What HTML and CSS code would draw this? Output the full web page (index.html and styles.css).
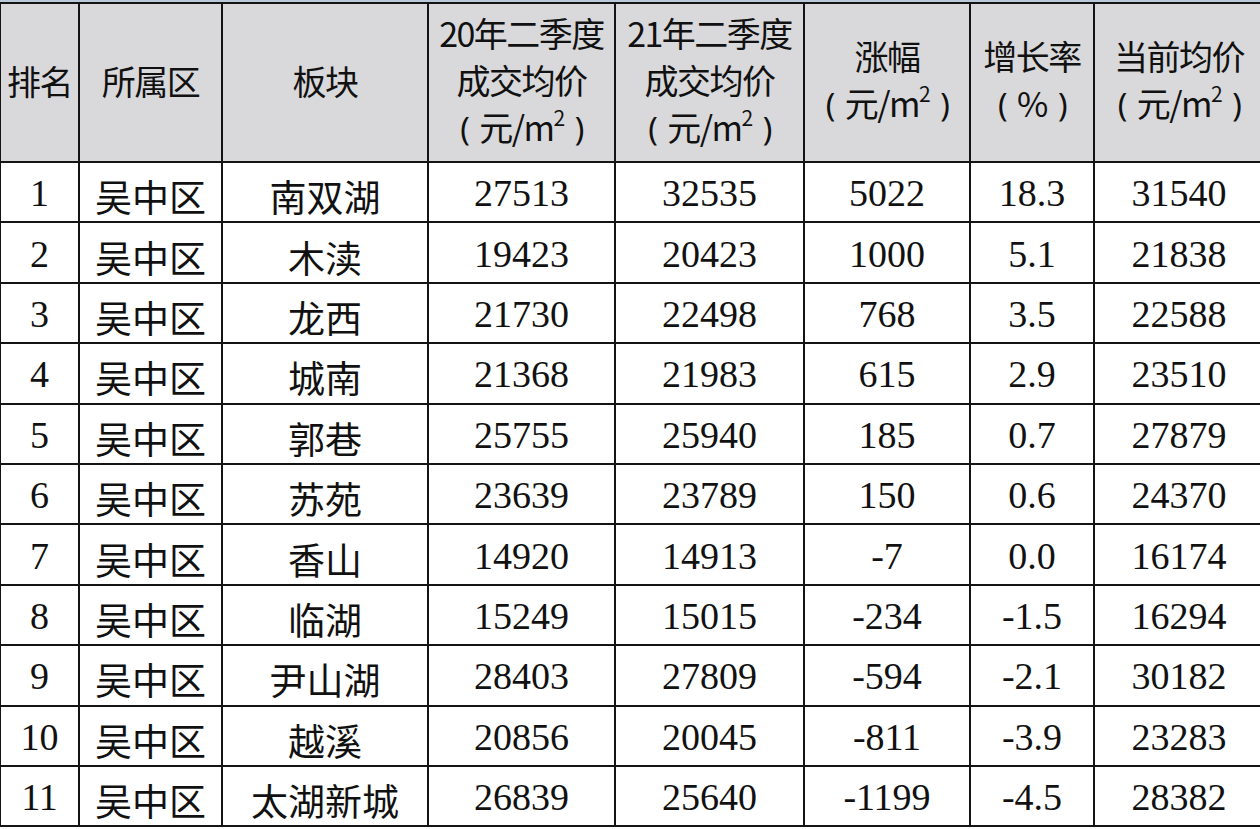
FILE: index.html
```html
<!DOCTYPE html>
<html lang="zh-CN">
<head>
<meta charset="utf-8">
<title>吴中区板块均价</title>
<link rel="stylesheet" href="styles.css">
</head>
<body>
<div class="frame">
<table class="grid">
  <colgroup>
    <col class="c1"><col class="c2"><col class="c3"><col class="c4"><col class="c5"><col class="c6"><col class="c7"><col class="c8">
  </colgroup>
  <thead>
    <tr>
      <th>排名</th>
      <th>所属区</th>
      <th>板块</th>
      <th>20年二季度<br>成交均价<br><span class="po">(</span>元/m<sup>2</sup><span class="pc">)</span></th>
      <th>21年二季度<br>成交均价<br><span class="po">(</span>元/m<sup>2</sup><span class="pc">)</span></th>
      <th>涨幅<br><span class="po">(</span>元/m<sup>2</sup><span class="pc">)</span></th>
      <th>增长率<br><span class="po">(</span>%<span class="pc">)</span></th>
      <th>当前均价<br><span class="po">(</span>元/m<sup>2</sup><span class="pc">)</span></th>
    </tr>
  </thead>
  <tbody>
    <tr><td class="n">1</td><td class="z">吴中区</td><td class="z">南双湖</td><td class="n">27513</td><td class="n">32535</td><td class="n">5022</td><td class="n">18.3</td><td class="n">31540</td></tr>
    <tr><td class="n">2</td><td class="z">吴中区</td><td class="z">木渎</td><td class="n">19423</td><td class="n">20423</td><td class="n">1000</td><td class="n">5.1</td><td class="n">21838</td></tr>
    <tr><td class="n">3</td><td class="z">吴中区</td><td class="z">龙西</td><td class="n">21730</td><td class="n">22498</td><td class="n">768</td><td class="n">3.5</td><td class="n">22588</td></tr>
    <tr><td class="n">4</td><td class="z">吴中区</td><td class="z">城南</td><td class="n">21368</td><td class="n">21983</td><td class="n">615</td><td class="n">2.9</td><td class="n">23510</td></tr>
    <tr><td class="n">5</td><td class="z">吴中区</td><td class="z">郭巷</td><td class="n">25755</td><td class="n">25940</td><td class="n">185</td><td class="n">0.7</td><td class="n">27879</td></tr>
    <tr><td class="n">6</td><td class="z">吴中区</td><td class="z">苏苑</td><td class="n">23639</td><td class="n">23789</td><td class="n">150</td><td class="n">0.6</td><td class="n">24370</td></tr>
    <tr><td class="n">7</td><td class="z">吴中区</td><td class="z">香山</td><td class="n">14920</td><td class="n">14913</td><td class="n">-7</td><td class="n">0.0</td><td class="n">16174</td></tr>
    <tr><td class="n">8</td><td class="z">吴中区</td><td class="z">临湖</td><td class="n">15249</td><td class="n">15015</td><td class="n">-234</td><td class="n">-1.5</td><td class="n">16294</td></tr>
    <tr><td class="n">9</td><td class="z">吴中区</td><td class="z">尹山湖</td><td class="n">28403</td><td class="n">27809</td><td class="n">-594</td><td class="n">-2.1</td><td class="n">30182</td></tr>
    <tr><td class="n">10</td><td class="z">吴中区</td><td class="z">越溪</td><td class="n">20856</td><td class="n">20045</td><td class="n">-811</td><td class="n">-3.9</td><td class="n">23283</td></tr>
    <tr><td class="n">11</td><td class="z">吴中区</td><td class="z">太湖新城</td><td class="n">26839</td><td class="n">25640</td><td class="n">-1199</td><td class="n">-4.5</td><td class="n">28382</td></tr>
  </tbody>
</table>
</div>
</body>
</html>
```
FILE: styles.css
```css
html, body {
  margin: 0;
  padding: 0;
  background: #ffffff;
}
.frame {
  width: 1260px;
  height: 829px;
  overflow: hidden;
  border-top: 2px solid #b9c9d8;
  box-sizing: border-box;
}
.grid {
  border-collapse: collapse;
  table-layout: fixed;
  width: 1264px;
  margin-left: -1px;
  color: #111;
}
.c1 { width: 79px; }
.c2 { width: 143px; }
.c3 { width: 206px; }
.c4 { width: 187px; }
.c5 { width: 189px; }
.c6 { width: 166px; }
.c7 { width: 124px; }
.c8 { width: 170px; }
.grid th, .grid td {
  border: 2px solid #141414;
  padding: 0;
  text-align: center;
  vertical-align: middle;
  overflow: hidden;
  white-space: nowrap;
}
.grid th {
  background: #d9d9db;
  height: 152px;
  padding-bottom: 5px;
  font-family: "Noto Sans CJK SC", "Noto Sans", sans-serif;
  font-weight: normal;
  font-size: 34px;
  line-height: 47px;
  letter-spacing: -1.5px;
}
.grid th .po {
  font-family: "Noto Sans", sans-serif;
  font-size: 32px;
  margin-right: 11px;
}
.grid th .pc {
  font-family: "Noto Sans", sans-serif;
  font-size: 32px;
  margin-left: 11px;
}
.grid th sup {
  font-size: 21px;
  line-height: 0;
  vertical-align: 15px;
}
.grid tbody tr {
  height: 60.4px;
}
.grid td.n {
  font-family: "Liberation Serif", "Times New Roman", serif;
  font-size: 38px;
  line-height: 40px;
  padding-top: 2px;
}
.grid td.z {
  font-family: "Noto Sans CJK SC", sans-serif;
  font-size: 37px;
  line-height: 40px;
  padding-top: 8px;
}
```
